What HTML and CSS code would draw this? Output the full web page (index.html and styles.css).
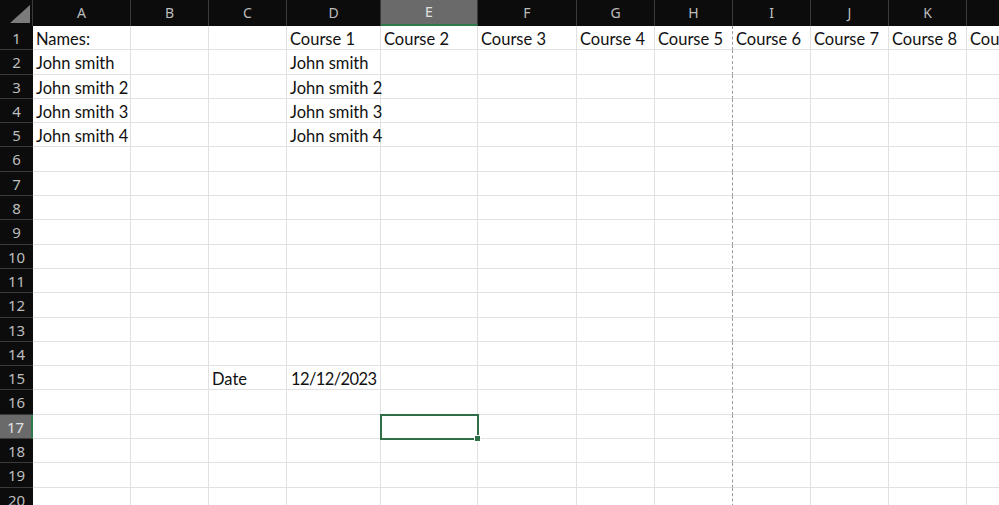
FILE: index.html
```html
<!DOCTYPE html>
<html>
<head>
<meta charset="utf-8">
<link rel="stylesheet" href="styles.css">
</head>
<body>
<div class="sheet">
  <div class="corner"><svg width="33" height="26" viewBox="0 0 33 26"><polygon points="30,5 30,23 10,23" fill="#7b7b7b"/></svg></div>
  <div class="ch">A</div><div class="ch">B</div><div class="ch">C</div><div class="ch">D</div><div class="ch sel">E</div><div class="ch">F</div><div class="ch">G</div><div class="ch">H</div><div class="ch">I</div><div class="ch">J</div><div class="ch">K</div><div class="ch">L</div>

  <div class="rh">1</div><div class="c">Names:</div><div class="c"></div><div class="c"></div><div class="c">Course 1</div><div class="c">Course 2</div><div class="c">Course 3</div><div class="c">Course 4</div><div class="c pb">Course 5</div><div class="c">Course 6</div><div class="c">Course 7</div><div class="c">Course 8</div><div class="c">Course 9</div>
  <div class="rh">2</div><div class="c">John smith</div><div class="c"></div><div class="c"></div><div class="c">John smith</div><div class="c"></div><div class="c"></div><div class="c"></div><div class="c pb"></div><div class="c"></div><div class="c"></div><div class="c"></div><div class="c"></div>
  <div class="rh">3</div><div class="c">John smith 2</div><div class="c"></div><div class="c"></div><div class="c">John smith 2</div><div class="c"></div><div class="c"></div><div class="c"></div><div class="c pb"></div><div class="c"></div><div class="c"></div><div class="c"></div><div class="c"></div>
  <div class="rh">4</div><div class="c">John smith 3</div><div class="c"></div><div class="c"></div><div class="c">John smith 3</div><div class="c"></div><div class="c"></div><div class="c"></div><div class="c pb"></div><div class="c"></div><div class="c"></div><div class="c"></div><div class="c"></div>
  <div class="rh">5</div><div class="c">John smith 4</div><div class="c"></div><div class="c"></div><div class="c">John smith 4</div><div class="c"></div><div class="c"></div><div class="c"></div><div class="c pb"></div><div class="c"></div><div class="c"></div><div class="c"></div><div class="c"></div>
  <div class="rh">6</div><div class="c"></div><div class="c"></div><div class="c"></div><div class="c"></div><div class="c"></div><div class="c"></div><div class="c"></div><div class="c pb"></div><div class="c"></div><div class="c"></div><div class="c"></div><div class="c"></div>
  <div class="rh">7</div><div class="c"></div><div class="c"></div><div class="c"></div><div class="c"></div><div class="c"></div><div class="c"></div><div class="c"></div><div class="c pb"></div><div class="c"></div><div class="c"></div><div class="c"></div><div class="c"></div>
  <div class="rh">8</div><div class="c"></div><div class="c"></div><div class="c"></div><div class="c"></div><div class="c"></div><div class="c"></div><div class="c"></div><div class="c pb"></div><div class="c"></div><div class="c"></div><div class="c"></div><div class="c"></div>
  <div class="rh">9</div><div class="c"></div><div class="c"></div><div class="c"></div><div class="c"></div><div class="c"></div><div class="c"></div><div class="c"></div><div class="c pb"></div><div class="c"></div><div class="c"></div><div class="c"></div><div class="c"></div>
  <div class="rh">10</div><div class="c"></div><div class="c"></div><div class="c"></div><div class="c"></div><div class="c"></div><div class="c"></div><div class="c"></div><div class="c pb"></div><div class="c"></div><div class="c"></div><div class="c"></div><div class="c"></div>
  <div class="rh">11</div><div class="c"></div><div class="c"></div><div class="c"></div><div class="c"></div><div class="c"></div><div class="c"></div><div class="c"></div><div class="c pb"></div><div class="c"></div><div class="c"></div><div class="c"></div><div class="c"></div>
  <div class="rh">12</div><div class="c"></div><div class="c"></div><div class="c"></div><div class="c"></div><div class="c"></div><div class="c"></div><div class="c"></div><div class="c pb"></div><div class="c"></div><div class="c"></div><div class="c"></div><div class="c"></div>
  <div class="rh">13</div><div class="c"></div><div class="c"></div><div class="c"></div><div class="c"></div><div class="c"></div><div class="c"></div><div class="c"></div><div class="c pb"></div><div class="c"></div><div class="c"></div><div class="c"></div><div class="c"></div>
  <div class="rh">14</div><div class="c"></div><div class="c"></div><div class="c"></div><div class="c"></div><div class="c"></div><div class="c"></div><div class="c"></div><div class="c pb"></div><div class="c"></div><div class="c"></div><div class="c"></div><div class="c"></div>
  <div class="rh">15</div><div class="c"></div><div class="c"></div><div class="c">Date</div><div class="c num">12/12/2023</div><div class="c"></div><div class="c"></div><div class="c"></div><div class="c pb"></div><div class="c"></div><div class="c"></div><div class="c"></div><div class="c"></div>
  <div class="rh">16</div><div class="c"></div><div class="c"></div><div class="c"></div><div class="c"></div><div class="c"></div><div class="c"></div><div class="c"></div><div class="c pb"></div><div class="c"></div><div class="c"></div><div class="c"></div><div class="c"></div>
  <div class="rh selr">17</div><div class="c"></div><div class="c"></div><div class="c"></div><div class="c"></div><div class="c active"></div><div class="c"></div><div class="c"></div><div class="c pb"></div><div class="c"></div><div class="c"></div><div class="c"></div><div class="c"></div>
  <div class="rh">18</div><div class="c"></div><div class="c"></div><div class="c"></div><div class="c"></div><div class="c"></div><div class="c"></div><div class="c"></div><div class="c pb"></div><div class="c"></div><div class="c"></div><div class="c"></div><div class="c"></div>
  <div class="rh">19</div><div class="c"></div><div class="c"></div><div class="c"></div><div class="c"></div><div class="c"></div><div class="c"></div><div class="c"></div><div class="c pb"></div><div class="c"></div><div class="c"></div><div class="c"></div><div class="c"></div>
  <div class="rh">20</div><div class="c"></div><div class="c"></div><div class="c"></div><div class="c"></div><div class="c"></div><div class="c"></div><div class="c"></div><div class="c pb"></div><div class="c"></div><div class="c"></div><div class="c"></div><div class="c"></div>
</div>
</body>
</html>
```

FILE: styles.css
```css
html, body {
  margin: 0;
  padding: 0;
  background: #ffffff;
  overflow: hidden;
}
.sheet {
  display: grid;
  grid-template-columns: 33px 98px 78px 78px 94px 97px 99px 78px 78px 78px 78px 78px 78px;
  grid-template-rows: 26px;
  grid-auto-rows: 24.3px;
  width: 1045px;
  font-family: Lato, "Noto Sans", sans-serif;
}
.corner {
  background: #0c0c0c;
  border-right: 1px solid #3a3a3a;
  box-sizing: border-box;
  height: 26px;
}
.corner svg { display: block; }
.ch {
  background: #0c0c0c;
  color: #bdbdbd;
  font-family: "Noto Sans", "Open Sans", sans-serif;
  font-size: 14px;
  text-align: center;
  line-height: 26px;
  border-right: 1px solid #3a3a3a;
  box-sizing: border-box;
}
.ch.sel {
  background: #6a6a6a;
  color: #e2e2e2;
  border-bottom: 2px solid #2f7a4d;
  line-height: 24px;
}
.rh {
  background: #0c0c0c;
  color: #bdbdbd;
  font-family: "Noto Sans", "Open Sans", sans-serif;
  font-size: 15px;
  text-align: center;
  line-height: 24px;
  border-bottom: 1px solid #3a3a3a;
  box-sizing: border-box;
}
.rh.selr {
  background: #6a6a6a;
  color: #e2e2e2;
  border-right: 2px solid #2f7a4d;
}
.c {
  border-right: 1px solid #e1e1e1;
  border-bottom: 1px solid #e1e1e1;
  box-sizing: border-box;
  color: #111;
  font-size: 16.5px;
  line-height: 24px;
  padding: 1px 0 0 3px;
  white-space: nowrap;
}
.c.num { padding-left: 4px; letter-spacing: -0.6px; }
.c.pb { border-right: 1px dashed #9a9a9a; }
.c.active {
  position: relative;
  outline: 2px solid #2f6f47;
  outline-offset: -1px;
}
.c.active::after {
  content: "";
  position: absolute;
  right: -4px;
  bottom: -4px;
  width: 5px;
  height: 5px;
  background: #2f6f47;
  border: 1px solid #fff;
}
```
